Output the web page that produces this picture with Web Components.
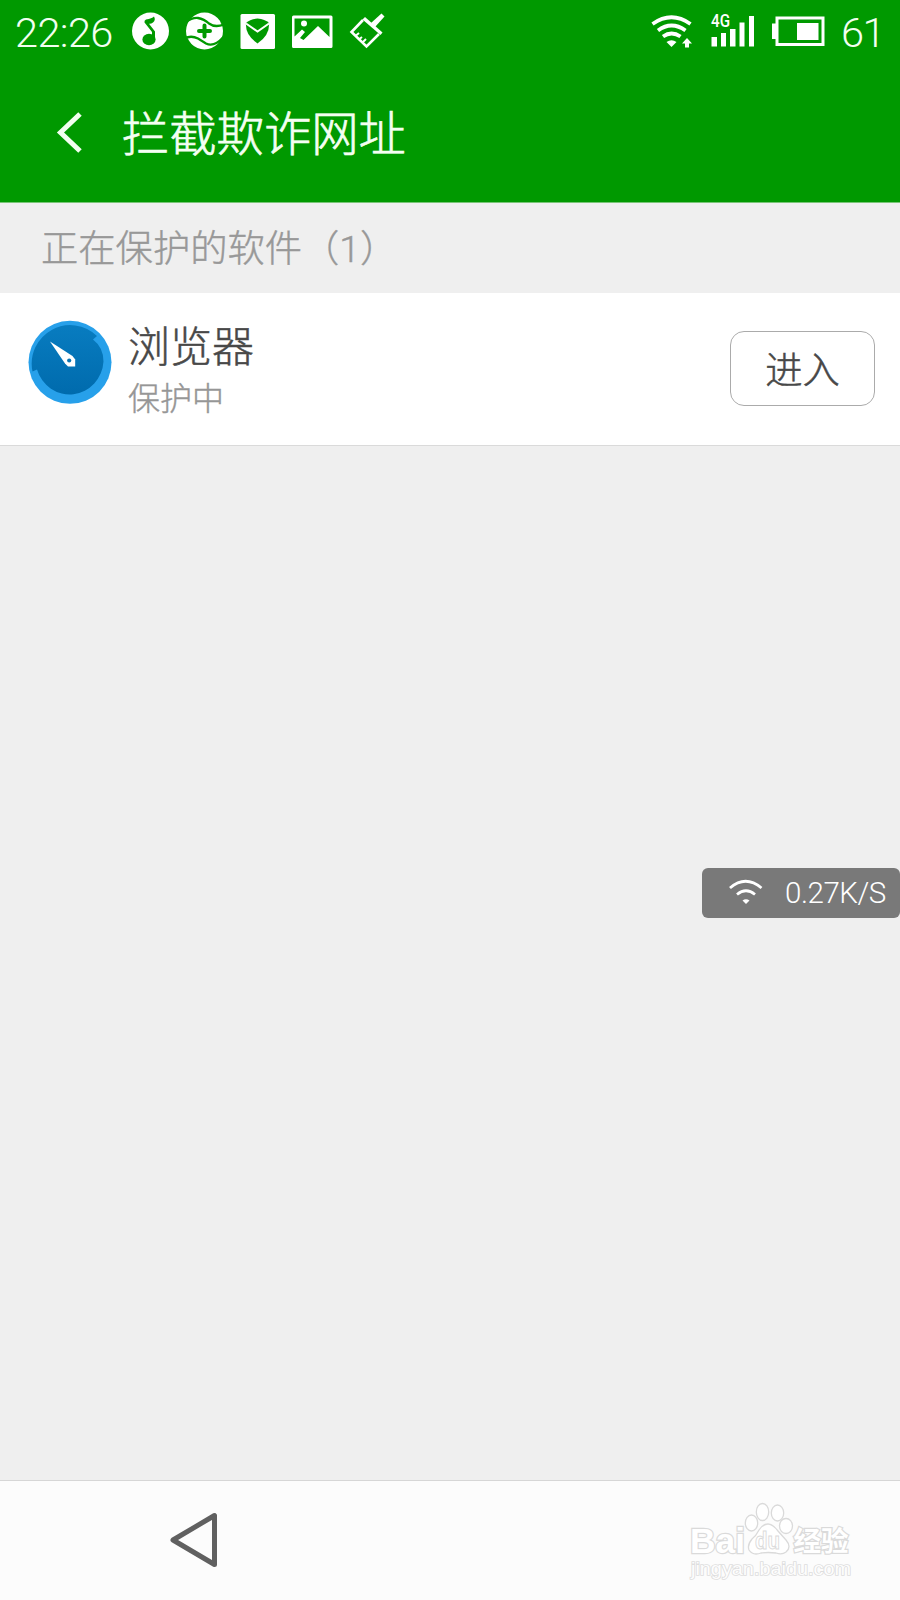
<!DOCTYPE html>
<html lang="zh-CN">
<head>
<meta charset="utf-8">
<title>拦截欺诈网址</title>
<style>
html,body{margin:0;padding:0}
body{width:900px;height:1600px;overflow:hidden;font-family:Roboto,"Noto Sans CJK SC",sans-serif;font-weight:300;background:#efefef}
</style>
</head>
<body>
<phone-screen>
  <status-bar slot="top" time="22:26" battery="61"></status-bar>
  <title-bar slot="top">拦截欺诈网址</title-bar>
  <section-label>正在保护的软件（1）</section-label>
  <app-row><span slot="name">浏览器</span><span slot="state">保护中</span><pill-button slot="action">进入</pill-button></app-row>
  <speed-badge slot="float">0.27K/S</speed-badge>
  <nav-bar slot="bottom"></nav-bar>
</phone-screen>
<script>
function define(name, markup, setup){
  const t=document.createElement('template');
  t.innerHTML=markup;
  customElements.define(name,class extends HTMLElement{
    constructor(){super();this.attachShadow({mode:'open'}).appendChild(t.content.cloneNode(true));}
    connectedCallback(){if(setup)setup(this,this.shadowRoot);}
  });
}
define('phone-screen',`<style>
:host{display:flex;flex-direction:column;width:900px;height:1600px;position:relative;background:#efefef;overflow:hidden}
main{flex:1}
</style><slot name="top"></slot><main><slot></slot></main><slot name="float"></slot><slot name="bottom"></slot>`);

define('status-bar',`<style>
:host{display:flex;height:64px;background:#009900;color:#f2fff0;font-size:41.500px;line-height:66px;align-items:flex-start;box-sizing:border-box;padding:0 17px 0 15px}
svg{display:block;flex:none;fill:#fff}
.time{width:117px;letter-spacing:-.6px}
.sp{flex:1}
.bat{width:42px;letter-spacing:-1.500px;white-space:nowrap;margin-left:16px}
</style>
<span class="time"></span>
<svg width="38" height="64" viewBox="132 0 38 64"><circle cx="150.500" cy="31" r="18.500"/><g fill="#009900"><ellipse cx="149" cy="39.500" rx="6.600" ry="5.800"/><path d="M152 38V32L144.500 22.500Q144 20.500 146 19.500Q152 18.500 154 16.500Q156 20 153 22.500Q151 24 149 23.700L155 31.500V40Z"/></g></svg>
<svg width="42" height="64" viewBox="182 0 42 64" style="margin-left:12px"><circle cx="204.500" cy="31" r="18.500"/><path d="M186 22Q192 17.500 198 18Q204 19 209 23.500Q215 28 224 24.500M184.500 38.500Q191 35 198 38.500L206 43.500Q214 47.500 223 37.500" fill="none" stroke="#009900" stroke-width="2.300"/><path d="M184 15H190L187 24L184 28ZM184 39L188 39L195 50H184ZM219 16H226V25L221 24Z" fill="#009900" opacity=".55"/><path d="M199 31H210M204.500 25.500V36.500" fill="none" stroke="#009900" stroke-width="4" stroke-linecap="round"/></svg>
<svg width="36" height="64" viewBox="240 0 36 64" style="margin-left:16px"><rect x="240.500" y="14" width="34.500" height="35" rx="1.500"/><path d="M257.500 18.500Q265 19 269 23Q270 35 257.500 43.500Q245 35 246 23Q250 19 257.500 18.500Z" fill="#009900"/><path d="M246 23.500L257.500 31.500L269 23.500" fill="none" stroke="#fff" stroke-width="2"/></svg>
<svg width="42" height="64" viewBox="291 0 42 64" style="margin-left:15px"><path fill-rule="evenodd" d="M293.500 15.500H331Q332.500 15.500 332.500 17V46.500Q332.500 48 331 48H293.500Q292 48 292 46.500V17Q292 15.500 293.500 15.500ZM294.500 18.500V36.500L302 29.500L305 32L300 38L303.500 40L318 26L329.500 37V18.500Z"/><circle cx="304" cy="23.500" r="3"/></svg>
<svg width="38" height="64" viewBox="349 0 38 64" style="margin-left:16px"><path d="M363 20L351.500 32L366.500 46.500L379 34" fill="none" stroke="#fff" stroke-width="2.600"/><path d="M365 17L382.500 32.500L380.500 35L362.500 19.500Z"/><path d="M371 23L381.500 13.500L384.500 16.500L375 27Z"/><path d="M356 35.500L359 33M359.500 39L362 37M362.500 42.500L366 39" fill="none" stroke="#fff" stroke-width="2"/></svg>
<span class="sp"></span>
<svg width="43" height="64" viewBox="650 0 43 64"><g fill="none" stroke="#fff" stroke-width="3.800"><path d="M651.500 24Q670.500 10.500 689.500 24"/><path d="M657 30.500Q670.500 20.500 684.500 30.500"/><path d="M662 36.500Q670.500 30.500 679.500 36.500"/></g><path d="M665.500 42Q670.500 38.500 675.500 42L670.500 47Z"/><path d="M686 38L691 43.500H688V47.500H684V43.500H681Z"/></svg>
<svg width="45" height="64" viewBox="709 0 45 64" style="margin-left:16px"><path d="M710.500 37h5.500v9.500h-5.500zM720 33h5v13.500h-5zM729 29h5.500v17.500h-5.500zM738.500 22.500h5v24h-5zM748 16h5v30.500h-5z"/><text x="710" y="27.300" font-size="18.500" font-weight="500" textLength="19" lengthAdjust="spacingAndGlyphs" font-family="Roboto">4G</text></svg>
<svg width="54" height="64" viewBox="770 0 54 64" style="margin-left:16px"><path fill-rule="evenodd" d="M774.500 16.500H823.500V46H774.500V39H771V23.500H774.500ZM777.500 19.500V43H820.500V19.500Z"/><rect x="796" y="23" width="21.500" height="17"/></svg>
<span class="bat"></span>`,(h,r)=>{r.querySelector('.time').textContent=h.getAttribute('time');r.querySelector('.bat').textContent=h.getAttribute('battery');});

define('title-bar',`<style>
:host{display:flex;height:139px;box-sizing:border-box;background:#009900;border-bottom:1px solid #79c577;color:#f4fff2;font-size:47.300px;line-height:70px;padding:33px 0 0 56px}
svg{display:block;margin-right:38px;flex:none}
span{padding-top:3px;-webkit-text-stroke:.7px currentColor}
</style><svg width="28" height="70" viewBox="56 97 28 70"><path d="M80 114L60.500 132.500L80 151" fill="none" stroke="#f2fff0" stroke-width="5"/></svg><span><slot></slot></span>`);

define('section-label',`<style>:host{display:block;height:90px;box-sizing:border-box;padding:3px 40px 0 41px;font-size:37.300px;line-height:87px;color:#989898;white-space:nowrap;-webkit-text-stroke:.4px currentColor}</style><slot></slot>`);

define('app-row',`<style>
:host{display:flex;height:153px;box-sizing:border-box;background:#fff;border-bottom:1px solid #dadada;padding:0 25px 0 28px}
svg{display:block;margin-top:27px;flex:none}
.t{flex:1;padding:24px 0 0 16px;display:flex;flex-direction:column}
.n{font-size:42px;line-height:62px;color:#484848;-webkit-text-stroke:.5px currentColor}
.s{font-size:32px;line-height:41px;color:#969696;-webkit-text-stroke:.4px currentColor}
.a{padding-top:38px}
</style>
<svg width="84" height="84" viewBox="28 319.500 84 84"><defs><linearGradient id="g" x1="0" y1="0" x2="0" y2="1"><stop offset="0" stop-color="#087cc0"/><stop offset="1" stop-color="#006bad"/></linearGradient></defs><circle cx="70" cy="361.800" r="41.500" fill="#27a0ea"/><path d="M32.500 371A38.500 38.500 0 0 1 97 335.500L93 339Q103.500 347 103.500 361A34 35 0 0 1 37 369Z" fill="url(#g)"/><path d="M50 341L72.500 355.500L75.200 359V366H68L65 363Z" fill="#fff"/><circle cx="69.200" cy="360" r="2.100" fill="#0873b2"/></svg>
<div class="t"><div class="n"><slot name="name"></slot></div><div class="s"><slot name="state"></slot></div></div>
<div class="a"><slot name="action"></slot></div>`);

define('pill-button',`<style>:host{display:block;width:145px;height:75px;box-sizing:border-box;border:1px solid #ababab;border-radius:14px;padding-top:3px;font-size:37.300px;line-height:73px;text-align:center;color:#484848;background:#fff;-webkit-text-stroke:.5px currentColor}</style><slot></slot>`);

define('speed-badge',`<style>
:host{position:absolute;left:702px;top:868px;width:198px;height:50px;display:flex;align-items:center;background:#797979;border-radius:6px;color:#fff;font-size:29.500px;line-height:50px;box-sizing:border-box;padding-left:26px;letter-spacing:-.45px}
svg{display:block;margin-right:21px;flex:none}
span{white-space:nowrap}
</style><svg width="36" height="50" viewBox="728 868 36 50"><g fill="none" stroke="#fff" stroke-width="2.800"><path d="M730 888Q745.500 874.500 761.500 888"/><path d="M737 894.500Q746 887 755 894.500"/></g><path d="M742.500 900.500Q746 898 749.500 900.500L746 904Z" fill="#fff"/></svg><span><slot></slot></span>`);

define('nav-bar',`<style>
:host{display:flex;justify-content:space-between;height:120px;box-sizing:border-box;background:#fcfcfc;border-top:1px solid #d6d6d6;padding:0 42px 0 168px}
svg{display:block;flex:none}
</style>
<svg width="52" height="119" viewBox="168 1481 52 119"><path d="M173 1540L214.500 1515.500V1564.500Z" fill="none" stroke="#606060" stroke-width="5" stroke-linejoin="round"/></svg>
<svg width="170" height="119" viewBox="688 1481 170 119"><g fill="#fff" stroke="#dadada" stroke-width="1.300">
<g font-family="Liberation Sans" font-weight="700" paint-order="stroke" stroke-width="2.400"><text x="690" y="1552.500" font-size="35" textLength="55" lengthAdjust="spacingAndGlyphs">Bai</text><text x="793.500" y="1550.500" font-size="27" font-family="Noto Sans CJK SC" font-weight="700" textLength="55" lengthAdjust="spacingAndGlyphs">经验</text></g>
<ellipse cx="751.500" cy="1523" rx="6.200" ry="8"/><ellipse cx="762.500" cy="1512" rx="6.200" ry="8.500"/><ellipse cx="777.500" cy="1513" rx="6.200" ry="8"/><ellipse cx="786" cy="1526" rx="6.500" ry="7.500"/>
<path d="M768 1524Q773 1524 778 1531L786 1540Q792 1547 786 1552Q782 1555 776 1553Q768 1552 761 1553Q753 1556 749 1550Q747 1545 752 1539Q756 1536 759 1530Q763 1524 768 1524Z"/>
<text x="755" y="1549" font-size="24" font-family="Liberation Sans" font-weight="700" textLength="25" lengthAdjust="spacingAndGlyphs" stroke-width="1">du</text></g>
<text x="691" y="1574.500" font-size="18" font-family="Liberation Sans" font-weight="400" fill="#fdfdfd" stroke="#dedede" stroke-width="1.600" paint-order="stroke" textLength="160" lengthAdjust="spacingAndGlyphs">jingyan.baidu.com</text></svg>`);
</script>
</body>
</html>
